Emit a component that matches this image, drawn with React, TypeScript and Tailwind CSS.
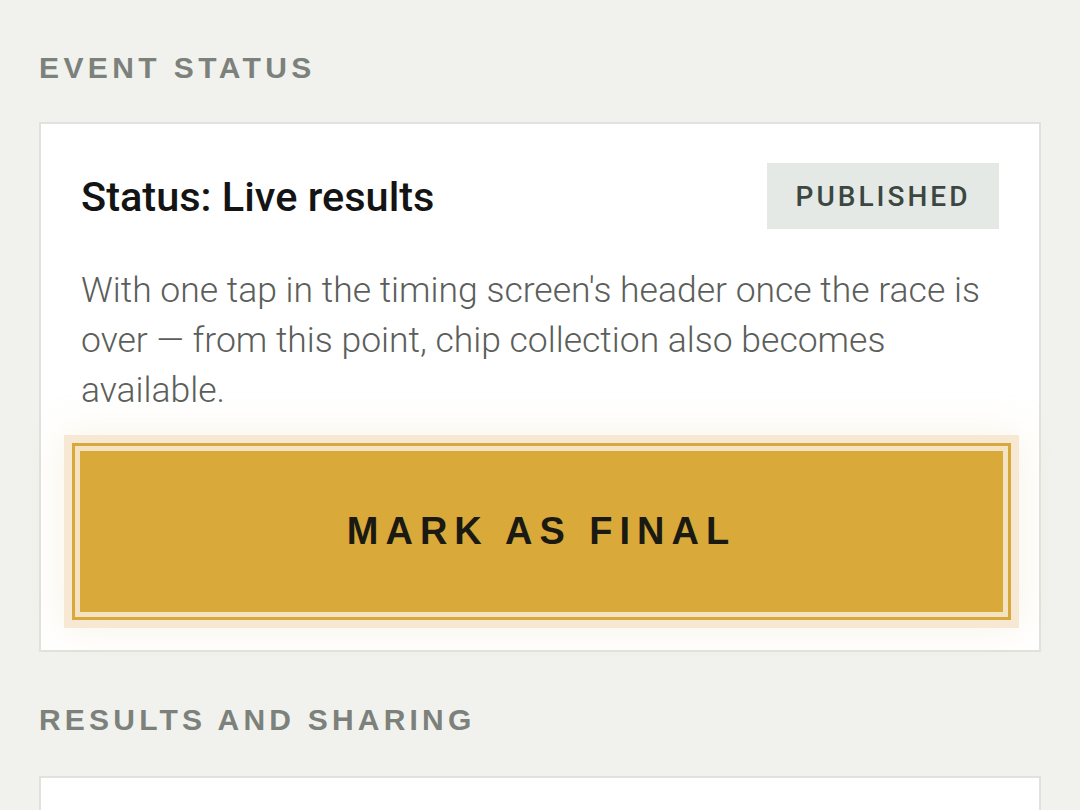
import React from "react";

const StatusCard: React.FC = () => {
  return (
    <div className="border-2 border-[#e1e2dd] bg-white px-[40px] pt-[39px] pb-[38px]">
      {/* HEADER */}
      <div className="flex items-center justify-between h-[66px]">
        <h2 className="text-[41.5px] font-medium text-[#141414] leading-none mt-[2px]">Status: Live results</h2>
        <span className="h-[66px] w-[232px] flex items-center justify-center bg-[#e4e9e5] text-[#3b4740] text-[28px] font-medium tracking-[3px] pt-[2px]">
          PUBLISHED
        </span>
      </div>

      <p className="mt-[36px] text-[35.5px] leading-[50px] font-light text-[#5b5e5a]">
        With one tap in the timing screen's header once the race is over — from this point, chip collection also
        becomes available.
      </p>

      {/* MARK AS FINAL */}
      <button className="mt-[36px] ml-[-1px] w-[923px] h-[161px] bg-[#d9a93a] text-[#1a1a12] text-[38px] font-bold tracking-[7px] font-['Liberation_Sans',Arial,sans-serif] shadow-[0_0_0_5px_#f3e3c3,0_0_0_8px_#d9a83a,0_0_0_16px_#f6e8d2,0_0_36px_18px_rgba(238,214,170,0.28)]">
        MARK AS FINAL
      </button>
    </div>
  );
};

const App: React.FC = () => {
  return (
    <div className="h-[810px] overflow-hidden bg-[#f1f2ee] px-[39px] pt-[53px] font-['Roboto','Noto_Sans',sans-serif]">
      <h1 className="text-[30px] leading-[30px] font-bold tracking-[4.4px] text-[#7c817b] font-['Liberation_Sans',Arial,sans-serif] mb-[39px]">
        EVENT STATUS
      </h1>

      <div className="w-[1002px]">
        <StatusCard />
      </div>

      <h1 className="mt-[53px] text-[30px] leading-[30px] font-bold tracking-[4.2px] text-[#7c817b] font-['Liberation_Sans',Arial,sans-serif] mb-[41px]">
        RESULTS AND SHARING
      </h1>

      <div className="w-[1002px] h-[200px] border-2 border-[#e1e2dd] bg-white" />
    </div>
  );
};

export default App;
